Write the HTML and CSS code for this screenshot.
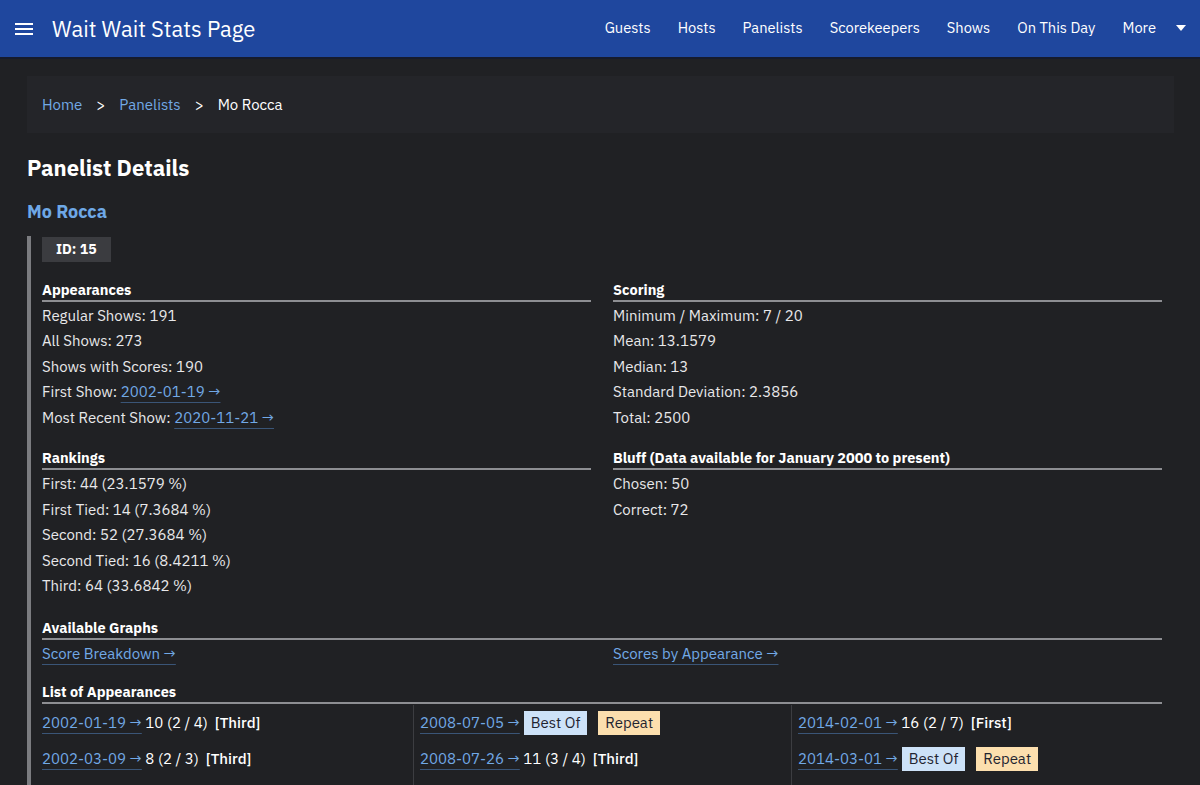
FILE: index.html
```html
<!DOCTYPE html>
<html lang="en">
<head>
<meta charset="utf-8">
<title>Mo Rocca - Panelist Details</title>
<link rel="stylesheet" href="styles.css">
</head>
<body>
<header class="navbar">
  <div class="brand">
    <svg class="hamburger" width="18" height="14" viewBox="0 0 18 14"><rect x="0" y="1" width="18" height="2" fill="#fff"/><rect x="0" y="6" width="18" height="2" fill="#fff"/><rect x="0" y="11" width="18" height="2" fill="#fff"/></svg>
    <span class="title">Wait Wait Stats Page</span>
  </div>
  <nav class="nav-links">
    <a href="#">Guests</a>
    <a href="#">Hosts</a>
    <a href="#">Panelists</a>
    <a href="#">Scorekeepers</a>
    <a href="#">Shows</a>
    <a href="#">On This Day</a>
    <a href="#" class="more">More <svg width="10" height="6" viewBox="0 0 10 6"><path d="M0 0h10L5 6z" fill="#fff"/></svg></a>
  </nav>
</header>

<main class="container">
  <div class="breadcrumb">
    <a href="#">Home</a><span class="sep">&gt;</span><a href="#">Panelists</a><span class="sep">&gt;</span><span class="current">Mo Rocca</span>
  </div>

  <h2 class="page-title">Panelist Details</h2>
  <h3 class="panelist-name">Mo Rocca</h3>

  <section class="details">
    <div class="id-badge">ID: 15</div>

    <div class="two-col">
      <div class="block">
        <h4 class="block-title">Appearances</h4>
        <ul class="info">
          <li>Regular Shows: 191</li>
          <li>All Shows: 273</li>
          <li>Shows with Scores: 190</li>
          <li>First Show: <a href="#">2002-01-19 →</a></li>
          <li>Most Recent Show: <a href="#">2020-11-21 →</a></li>
        </ul>
      </div>
      <div class="block">
        <h4 class="block-title">Scoring</h4>
        <ul class="info">
          <li>Minimum / Maximum: 7 / 20</li>
          <li>Mean: 13.1579</li>
          <li>Median: 13</li>
          <li>Standard Deviation: 2.3856</li>
          <li>Total: 2500</li>
        </ul>
      </div>
      <div class="block">
        <h4 class="block-title">Rankings</h4>
        <ul class="info">
          <li>First: 44 (23.1579 %)</li>
          <li>First Tied: 14 (7.3684 %)</li>
          <li>Second: 52 (27.3684 %)</li>
          <li>Second Tied: 16 (8.4211 %)</li>
          <li>Third: 64 (33.6842 %)</li>
        </ul>
      </div>
      <div class="block">
        <h4 class="block-title">Bluff (Data available for January 2000 to present)</h4>
        <ul class="info">
          <li>Chosen: 50</li>
          <li>Correct: 72</li>
        </ul>
      </div>
    </div>

    <div class="block block-graphs">
      <h4 class="block-title">Available Graphs</h4>
      <div class="graph-links">
        <a href="#">Score Breakdown →</a>
        <a href="#">Scores by Appearance →</a>
      </div>
    </div>

    <div class="block block-list">
      <h4 class="block-title">List of Appearances</h4>
      <ul class="appearances">
        <li><a href="#">2002-01-19 →</a> 10 (2 / 4)&nbsp; <span class="rank">[Third]</span></li>
        <li><a href="#">2002-03-09 →</a> 8 (2 / 3)&nbsp; <span class="rank">[Third]</span></li>
        <li><a href="#">2008-07-05 →</a> <span class="tag best">Best Of</span><span class="tag repeat">Repeat</span></li>
        <li><a href="#">2008-07-26 →</a> 11 (3 / 4)&nbsp; <span class="rank">[Third]</span></li>
        <li><a href="#">2014-02-01 →</a> 16 (2 / 7)&nbsp; <span class="rank">[First]</span></li>
        <li><a href="#">2014-03-01 →</a> <span class="tag best">Best Of</span><span class="tag repeat">Repeat</span></li>
      </ul>
    </div>
  </section>
</main>
</body>
</html>
```

FILE: styles.css
```css
* { box-sizing: border-box; }

html, body {
  margin: 0;
  padding: 0;
}

body {
  background: #202124;
  color: #e8e8ea;
  font-family: "IBM Plex Sans", "Noto Sans", "Liberation Sans", sans-serif;
  font-size: 15px;
  line-height: 1.7;
}

a {
  color: #72a9e6;
  text-decoration: none;
}

.navbar {
  height: 59px;
  background: #1f479e;
  border-bottom: 2px solid #161b2c;
  display: flex;
  align-items: center;
  justify-content: space-between;
  padding: 0 14px 0 15px;
}

.brand {
  display: flex;
  align-items: center;
  gap: 19px;
}

.hamburger { display: block; }

.title {
  color: #fff;
  font-size: 22px;
  line-height: 1;
}

.nav-links {
  display: flex;
  align-items: center;
}

.nav-links a {
  color: #fff;
  padding: 0 13.5px;
  font-size: 14.7px;
}

.nav-links a.more {
  padding-right: 0;
  display: flex;
  align-items: center;
  gap: 20px;
}

.container {
  padding: 17px 26px 0 27px;
}

.breadcrumb {
  background: #242529;
  height: 57px;
  display: flex;
  align-items: center;
  padding: 0 15px;
}

.breadcrumb .sep {
  color: #fff;
  margin: 0 14px;
}

.breadcrumb .current { color: #fff; }

.page-title {
  font-size: 22px;
  font-weight: 700;
  color: #fff;
  margin: 22px 0 0;
  line-height: 1.2;
}

.panelist-name {
  font-size: 18px;
  font-weight: 700;
  color: #6ea8e6;
  margin: 20px 0 0;
  line-height: 1.2;
}

.details {
  margin-top: 13px;
  border-left: 4px solid #7b7c80;
  padding: 0 12px 0 11px;
}

.id-badge {
  display: inline-block;
  background: #3b3c40;
  color: #fff;
  font-weight: 700;
  font-size: 14px;
  line-height: 25px;
  padding: 0 14px;
}

.two-col {
  display: grid;
  grid-template-columns: 1fr 1fr;
  column-gap: 22px;
}

.block {
  margin-top: 18px;
}

.block-graphs {
  margin-top: 19px;
}

.block-list {
  margin-top: 16px;
}

.block-title {
  margin: 0;
  font-size: 14.5px;
  font-weight: 700;
  color: #fff;
  line-height: 20px;
  border-bottom: 2px solid #8d8e92;
}

.info {
  list-style: none;
  margin: 0;
  padding: 1px 0 0;
}

.info li { line-height: 25.5px; }

.info a, .graph-links a, .appearances a {
  text-decoration: underline;
  text-decoration-color: #3a5577;
  text-underline-offset: 5px;
  text-decoration-thickness: 1px;
}

.graph-links {
  display: grid;
  grid-template-columns: 1fr 1fr;
  column-gap: 22px;
  line-height: 25px;
  padding-top: 1px;
}

.appearances {
  list-style: none;
  margin: 0;
  padding: 1px 0 0;
  height: 95px;
  column-count: 3;
  column-gap: 14px;
  column-rule: 1px solid #3c3d41;
}

.appearances li {
  height: 36px;
  display: flex;
  align-items: center;
  white-space: pre;
  color: #fff;
  break-inside: avoid;
}

.rank {
  font-weight: 500;
}

.tag {
  display: inline-block;
  line-height: 24px;
  padding: 0 7px;
  color: #1f2430;
  margin-left: 4px;
  margin-right: 7px;
}

.tag.best { background: #cde2f8; }
.tag.repeat { background: #fcdfae; margin-left: 4px; }
```
